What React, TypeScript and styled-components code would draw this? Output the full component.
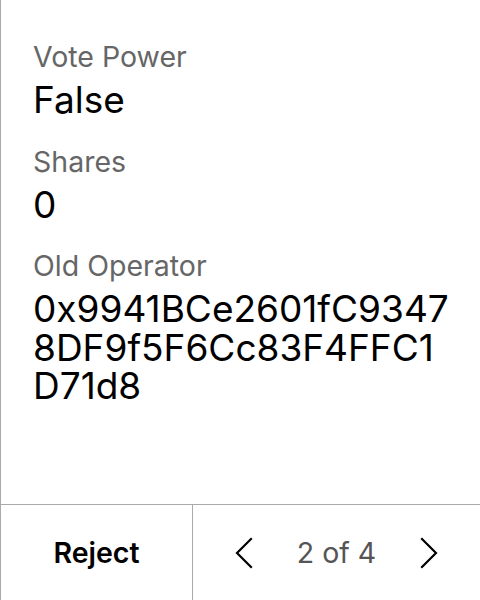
import React from "react";
import styled, { createGlobalStyle } from "styled-components";

const Global = createGlobalStyle`
  html, body { margin: 0; padding: 0; background: #fff; }
  body { font-family: Inter, "Noto Sans", sans-serif; color: #000; }
`;

const Card = styled.div`
  width: 480px;
  height: 600px;
  box-sizing: border-box;
  border-left: 1px solid #aaaaaa;
  display: flex;
  flex-direction: column;
  background: #fff;
`;

const Body = styled.div`
  flex: 1;
  padding: 41px 30px 0 32px;
  display: flex;
  flex-direction: column;
  gap: 26px;
`;

const Field = styled.div`
  display: flex;
  flex-direction: column;
  gap: 8px;
`;

const Label = styled.div`
  font-size: 28.5px;
  line-height: 32px;
  color: #666;
`;

const Value = styled.div`
  font-size: 37px;
  line-height: 38.5px;
  color: #000;
  word-break: break-all;
`;

const Footer = styled.div`
  height: 95px;
  border-top: 1px solid #aaaaaa;
  display: grid;
  grid-template-columns: 192px 1fr;
`;

const RejectCell = styled.button`
  all: unset;
  display: flex;
  align-items: center;
  justify-content: center;
  font-family: Inter, sans-serif;
  font-weight: 600;
  font-size: 28.5px;
  color: #000;
  border-right: 1px solid #aaaaaa;
`;

const Pager = styled.div`
  display: flex;
  align-items: center;
  justify-content: center;
  gap: 44px;
`;

const PageText = styled.span`
  font-size: 28.5px;
  color: #555;
`;

const Chevron = ({ dir }: { dir: "left" | "right" }) => (
  <svg width="18" height="32" viewBox="0 0 18 32" fill="none">
    <path
      d={dir === "left" ? "M16 2 L2 16 L16 30" : "M2 2 L16 16 L2 30"}
      stroke="#000"
      strokeWidth="2.2"
      strokeLinecap="square"
    />
  </svg>
);

export default function App() {
  return (
    <>
      <Global />
      <Card>
        <Body>
          <Field>
            <Label>Vote Power</Label>
            <Value>False</Value>
          </Field>
          <Field>
            <Label>Shares</Label>
            <Value>0</Value>
          </Field>
          <Field>
            <Label>Old Operator</Label>
            <Value>0x9941BCe2601fC93478DF9f5F6Cc83F4FFC1D71d8</Value>
          </Field>
        </Body>
        <Footer>
          <RejectCell>Reject</RejectCell>
          <Pager>
            <Chevron dir="left" />
            <PageText>2 of 4</PageText>
            <Chevron dir="right" />
          </Pager>
        </Footer>
      </Card>
    </>
  );
}
